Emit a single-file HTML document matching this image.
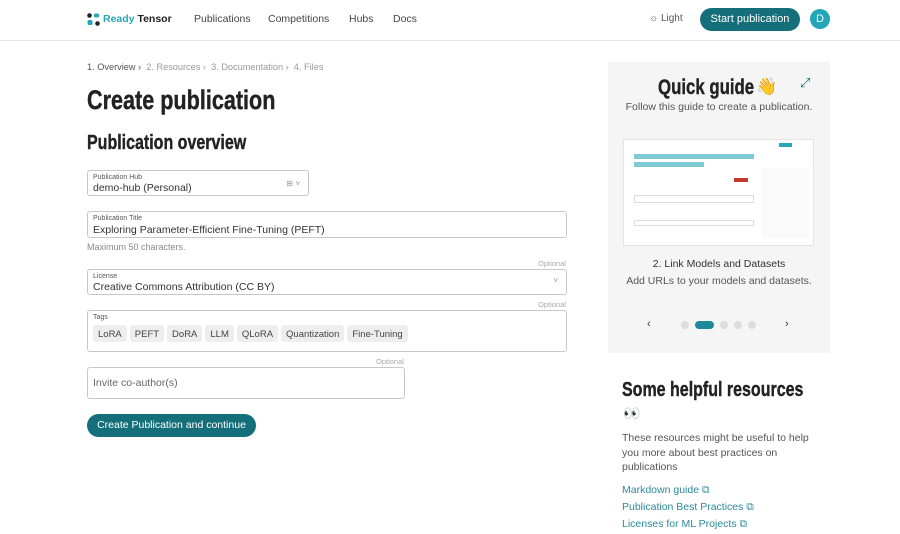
<!DOCTYPE html>
<html><head><meta charset="utf-8"><style>
*{box-sizing:border-box;margin:0;padding:0}
body{width:900px;height:534px;overflow:hidden;background:#fff;font-family:"Liberation Sans",sans-serif;color:#333;position:relative}
.a{position:absolute}
.cond{font-family:"Liberation Sans",sans-serif;font-weight:bold;color:#222;transform:scaleX(0.8);transform-origin:left top;white-space:nowrap;-webkit-text-stroke:0.4px #222}
.nav{font-size:10.5px;color:#444}
.field{position:absolute;border:1px solid #c8c8c8;border-radius:3px;background:#fff}
.lbl{position:absolute;left:5px;top:3px;font-size:7px;color:#555}
.val{position:absolute;left:5px;font-size:10.5px;color:#333}
.opt{position:absolute;font-size:7.5px;color:#aaa}
.tag{display:inline-block;background:#eee;border-radius:3px;font-size:9.5px;color:#444;padding:4px 5px;margin-right:3px;height:17px}
.link{font-size:10.5px;color:#2b8a9a;position:absolute;left:622px}
</style></head><body>
<div class="a" style="left:0;top:40px;width:900px;height:1px;background:#e6e6e6"></div>
<svg class="a" style="left:87px;top:13px" width="13" height="13"><circle cx="2.5" cy="2.5" r="2.3" fill="#222"/><circle cx="10.5" cy="10.5" r="2.3" fill="#222"/><rect x="7" y="0.5" width="5" height="4" rx="1.5" fill="#2aa5b5"/><rect x="0.5" y="7" width="5" height="5" rx="1.5" fill="#2aa5b5"/></svg>
<div class="a" style="left:103px;top:13px;font-size:10.5px;font-weight:bold"><span style="color:#2aa5b5">Ready</span> <span style="color:#222">Tensor</span></div>
<div class="a nav" style="left:194px;top:13px">Publications</div>
<div class="a nav" style="left:268px;top:13px">Competitions</div>
<div class="a nav" style="left:349px;top:13px">Hubs</div>
<div class="a nav" style="left:393px;top:13px">Docs</div>
<div class="a" style="left:649px;top:13px;font-size:10px;color:#555">☼ Light</div>
<div class="a" style="left:700px;top:8px;width:100px;height:23px;border-radius:12px;background:#156f7a;color:#fff;font-size:11px;text-align:center;line-height:23px">Start publication</div>
<div class="a" style="left:810px;top:9px;width:20px;height:20px;border-radius:50%;background:#22a6b8;color:#fff;font-size:11px;text-align:center;line-height:20px">D</div>

<div class="a" style="left:87px;top:62px;font-size:9.2px;color:#999"><span style="color:#555">1. Overview ›</span>&nbsp; 2. Resources ›&nbsp; 3. Documentation ›&nbsp; 4. Files</div>
<div class="a cond" style="left:87px;top:85px;font-size:27px">Create publication</div>
<div class="a cond" style="left:87px;top:132px;font-size:20px">Publication overview</div>

<div class="field" style="left:87px;top:170px;width:222px;height:26px"><div class="lbl">Publication Hub</div><div class="val" style="top:11px">demo-hub (Personal)</div><div class="a" style="right:8px;top:8px;font-size:8px;color:#999">⊞ ˅</div></div>
<div class="field" style="left:87px;top:211px;width:480px;height:27px"><div class="lbl">Publication Title</div><div class="val" style="top:12px">Exploring Parameter-Efficient Fine-Tuning (PEFT)</div></div>
<div class="a" style="left:87px;top:242px;font-size:9px;color:#888">Maximum 50 characters.</div>
<div class="opt" style="left:538px;top:259px">Optional</div>
<div class="field" style="left:87px;top:269px;width:480px;height:26px"><div class="lbl">License</div><div class="val" style="top:11px">Creative Commons Attribution (CC BY)</div><div class="a" style="right:8px;top:6px;font-size:8px;color:#999">˅</div></div>
<div class="opt" style="left:538px;top:300px">Optional</div>
<div class="field" style="left:87px;top:310px;width:480px;height:42px"><div class="lbl">Tags</div><div class="a" style="left:5px;top:13px;white-space:nowrap"><span class="tag">LoRA</span><span class="tag">PEFT</span><span class="tag">DoRA</span><span class="tag">LLM</span><span class="tag">QLoRA</span><span class="tag">Quantization</span><span class="tag">Fine-Tuning</span></div></div>
<div class="opt" style="left:376px;top:357px">Optional</div>
<div class="field" style="left:87px;top:367px;width:318px;height:32px"><div class="val" style="top:9px;color:#666">Invite co-author(s)</div></div>
<div class="a" style="left:87px;top:414px;width:169px;height:23px;border-radius:12px;background:#156f7a;color:#fff;font-size:10.5px;text-align:center;line-height:23px">Create Publication and continue</div>

<div class="a" style="left:608px;top:62px;width:222px;height:291px;background:#f5f5f5"></div>
<div class="a cond" style="left:658px;top:76px;font-size:21px">Quick guide</div>
<div class="a" style="left:756px;top:77px;font-size:17px">👋</div>
<div class="a" style="left:800px;top:75px;font-size:13px;color:#156f7a">⤢</div>
<div class="a" style="left:608px;top:101px;width:222px;text-align:center;font-size:10.5px;color:#555">Follow this guide to create a publication.</div>
<div class="a" style="left:623px;top:139px;width:191px;height:107px;background:#fff;border:1px solid #e4e4e4">
<div class="a" style="left:10px;top:14px;width:120px;height:5px;background:#2aa5b5;opacity:.6"></div>
<div class="a" style="left:10px;top:22px;width:70px;height:5px;background:#2aa5b5;opacity:.6"></div>
<div class="a" style="left:110px;top:38px;width:14px;height:4px;background:#c0392b"></div>
<div class="a" style="left:155px;top:3px;width:13px;height:4px;background:#2aa5b5"></div>
<div class="a" style="left:10px;top:55px;width:120px;height:8px;border:1px solid #ddd"></div>
<div class="a" style="left:10px;top:80px;width:120px;height:6px;border:1px solid #ddd"></div>
<div class="a" style="left:138px;top:28px;width:48px;height:70px;background:#fafafa"></div>
</div>
<div class="a" style="left:608px;top:258px;width:222px;text-align:center;font-size:10.5px;color:#333">2. Link Models and Datasets</div>
<div class="a" style="left:608px;top:275px;width:222px;text-align:center;font-size:10.5px;color:#555">Add URLs to your models and datasets.</div>
<div class="a" style="left:647px;top:318px;font-size:11px;color:#333">‹</div>
<div class="a" style="left:785px;top:318px;font-size:11px;color:#333">›</div>
<div class="a" style="left:681px;top:321px;width:8px;height:8px;border-radius:50%;background:#ddd"></div>
<div class="a" style="left:695px;top:321px;width:19px;height:8px;border-radius:4px;background:#1d8a99"></div>
<div class="a" style="left:720px;top:321px;width:8px;height:8px;border-radius:50%;background:#ddd"></div>
<div class="a" style="left:734px;top:321px;width:8px;height:8px;border-radius:50%;background:#ddd"></div>
<div class="a" style="left:748px;top:321px;width:8px;height:8px;border-radius:50%;background:#ddd"></div>

<div class="a cond" style="left:622px;top:379px;font-size:20px">Some helpful resources</div>
<div class="a" style="left:623px;top:405px;font-size:14px">👀</div>
<div class="a" style="left:622px;top:431px;width:190px;font-size:10.5px;line-height:14.5px;color:#555">These resources might be useful to help you more about best practices on publications</div>
<div class="link" style="top:484px">Markdown guide ⧉</div>
<div class="link" style="top:501px">Publication Best Practices ⧉</div>
<div class="link" style="top:518px">Licenses for ML Projects ⧉</div>
</body></html>
